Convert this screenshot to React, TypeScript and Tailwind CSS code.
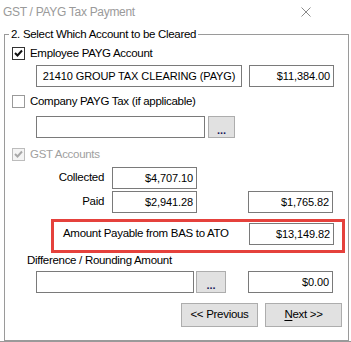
import React from 'react';

const font = { fontFamily: '"Liberation Sans", Arial, sans-serif' };

const Check = ({ checked, disabled }: { checked?: boolean; disabled?: boolean }) => (
  <span
    className={`flex h-[13px] w-[13px] shrink-0 items-center justify-center border ${
      disabled ? 'border-[#bcbcbc] bg-[#f4f4f4]' : checked ? 'border-[#333333] bg-white' : 'border-[#9a9a9a] bg-white'
    }`}
  >
    {checked && (
      <svg width="9" height="9" viewBox="0 0 9 9">
        <path d="M1 4 L3.5 6.5 L8 1.5" fill="none" stroke={disabled ? '#a8a8a8' : '#111111'} strokeWidth="2" />
      </svg>
    )}
  </span>
);

const Box = ({ w, value, align = 'right' }: { w: string; value?: string; align?: 'right' | 'center' }) => (
  <div
    className={`flex h-[22px] shrink-0 items-center border border-[#7a7a7a] bg-white px-[3px] text-[11px] tracking-[-0.1px] text-black ${w} ${
      align === 'right' ? 'justify-end' : 'justify-center'
    }`}
  >
    {value}
  </div>
);

const DotsButton = ({ w }: { w: string }) => (
  <div
    className={`flex h-[22px] shrink-0 items-end justify-center border border-[#adadad] bg-[#e1e1e1] pb-[2px] text-[11px] font-bold leading-[10px] text-[#1a1a5a] ${w}`}
  >
    ...
  </div>
);

export default function App() {
  return (
    <div className="h-[342px] w-[351px] overflow-hidden bg-white text-[11px] text-black" style={font}>
      {/* title bar */}
      <div className="flex h-[23px] items-center justify-between pl-[3px] pr-[40px]">
        <span className="text-[12px] tracking-[-0.3px] text-[#9a9a9a]">GST / PAYG Tax Payment</span>
        <svg width="10" height="10" viewBox="0 0 10 10">
          <path d="M0.5 0.5 L9.5 9.5 M9.5 0.5 L0.5 9.5" stroke="#8a8a8a" strokeWidth="1" />
        </svg>
      </div>

      {/* group box */}
      <div className="ml-[4px] mt-[11px] flex h-[307px] w-[345px] flex-col border border-[#9a9a9a]">
        <div className="-mt-[8px] ml-[4px] w-fit bg-white px-[2px] text-[11.5px] leading-[14px] tracking-[-0.3px]">
          2. Select Which Account to be Cleared
        </div>

        <div className="ml-[7px] mt-[6px] flex items-center gap-[5px] leading-[13px]">
          <Check checked />
          <span className="text-[11.5px] tracking-[-0.3px]">Employee PAYG Account</span>
        </div>

        <div className="ml-[31px] mt-[5px] flex gap-[7px]">
          <Box w="w-[206px]" value="21410 GROUP TAX CLEARING (PAYG)" align="center" />
          <Box w="w-[85px]" value="$11,384.00" />
        </div>

        <div className="ml-[7px] mt-[8px] flex items-center gap-[5px] leading-[13px]">
          <Check />
          <span className="text-[11.5px] tracking-[-0.3px]">Company PAYG Tax (if applicable)</span>
        </div>

        <div className="ml-[31px] mt-[8px] flex gap-[3px]">
          <Box w="w-[169px]" />
          <DotsButton w="w-[27px]" />
        </div>

        <div className="ml-[7px] mt-[10px] flex items-center gap-[5px] leading-[13px]">
          <Check checked disabled />
          <span className="text-[11.5px] tracking-[-0.3px] text-[#a0a0a0]">GST Accounts</span>
        </div>

        <div className="mt-[6px] flex items-center">
          <span className="w-[99px] text-right text-[11.5px] tracking-[-0.3px]">Collected</span>
          <div className="ml-[8px]">
            <Box w="w-[85px]" value="$4,707.10" />
          </div>
        </div>

        <div className="mt-[2px] flex items-center">
          <span className="w-[99px] text-right text-[11.5px] tracking-[-0.3px]">Paid</span>
          <div className="ml-[8px] flex gap-[51px]">
            <Box w="w-[85px]" value="$2,941.28" />
            <Box w="w-[85px]" value="$1,765.82" />
          </div>
        </div>

        <div className="ml-[46px] mt-[6px] flex h-[34px] w-[294px] items-start justify-between border-[3px] border-[#e5413c] pl-[9px] pr-[8px] pt-[1px]">
          <span className="flex h-[22px] items-center text-[11.5px] tracking-[-0.3px]">Amount Payable from BAS to ATO</span>
          <Box w="w-[85px]" value="$13,149.82" />
        </div>

        <div className="ml-[22px] mt-[0px] text-[11.5px] leading-[14px] tracking-[-0.3px]">Difference / Rounding Amount</div>

        <div className="ml-[31px] mt-[4px] flex">
          <Box w="w-[158px]" />
          <div className="ml-[2px]">
            <DotsButton w="w-[30px]" />
          </div>
          <div className="ml-[22px]">
            <Box w="w-[85px]" value="$0.00" />
          </div>
        </div>

        <div className="mr-[6px] mt-[10px] flex justify-end gap-[7px]">
          <div className="flex h-[24px] w-[77px] items-center justify-center border border-[#adadad] bg-[#e1e1e1] text-[11.5px] tracking-[-0.3px]">
            &lt;&lt; Previous
          </div>
          <div className="flex h-[24px] w-[77px] items-center justify-center border border-[#adadad] bg-[#e1e1e1] text-[11.5px] tracking-[-0.3px]">
            <span className="underline underline-offset-2">N</span>ext &gt;&gt;
          </div>
        </div>
      </div>
      <div className="h-[1px] w-full bg-[#9a9a9a]" />
    </div>
  );
}
